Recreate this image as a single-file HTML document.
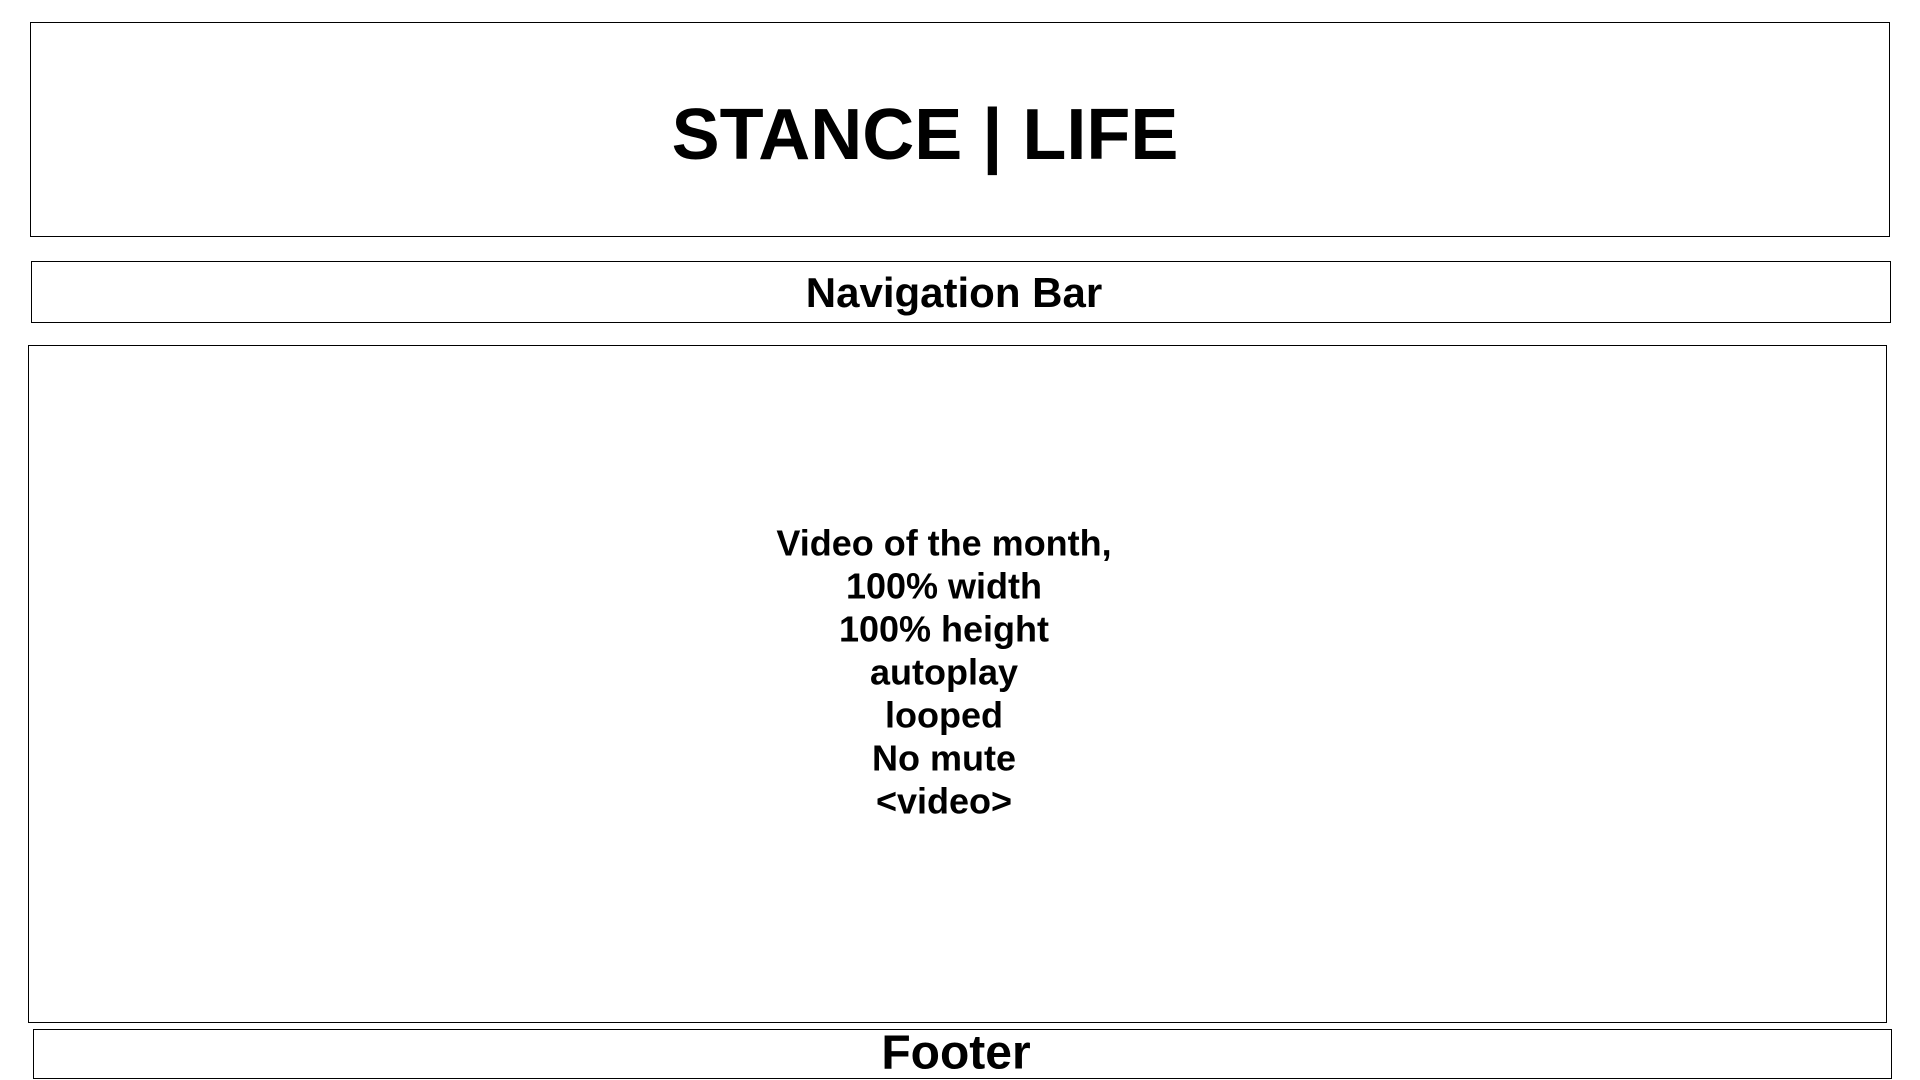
<!DOCTYPE html>
<html><head><meta charset="utf-8"><style>
html,body{margin:0;padding:0;background:#fff;width:1920px;height:1080px;overflow:hidden;position:relative;font-family:"Liberation Sans",sans-serif;font-weight:bold;color:#000}
.b{position:absolute;border:1px solid #000;box-sizing:border-box}
.t{position:absolute;white-space:nowrap;transform:translate(-50%,-50%);text-align:center}
</style></head><body>
<div class="b" style="left:30px;top:22px;width:1860px;height:215px"></div>
<div class="t" style="left:925px;top:135px;font-size:72px">STANCE | LIFE</div>
<div class="b" style="left:31px;top:261px;width:1860px;height:62px"></div>
<div class="t" style="left:954px;top:293px;font-size:42px">Navigation Bar</div>
<div class="b" style="left:28px;top:345px;width:1859px;height:678px"></div>
<div class="t" style="left:944px;top:672px;font-size:36px;line-height:43px">Video of the month,<br>100% width<br>100% height<br>autoplay<br>looped<br>No mute<br>&lt;video&gt;</div>
<div class="b" style="left:33px;top:1029px;width:1859px;height:50px"></div>
<div class="t" style="left:956px;top:1053px;font-size:48px">Footer</div>
</body></html>
